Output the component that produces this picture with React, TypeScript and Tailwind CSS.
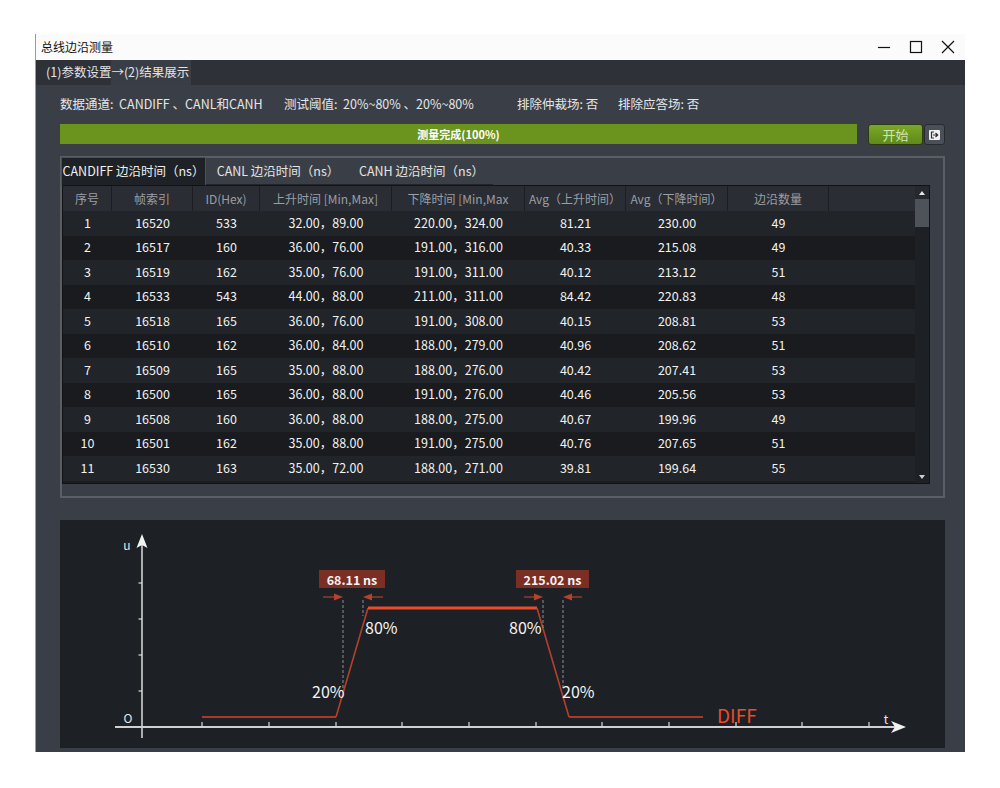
import React from "react";

const rows = [
  ["1", "16520", "533", "32.00，89.00", "220.00，324.00", "81.21", "230.00", "49"],
  ["2", "16517", "160", "36.00，76.00", "191.00，316.00", "40.33", "215.08", "49"],
  ["3", "16519", "162", "35.00，76.00", "191.00，311.00", "40.12", "213.12", "51"],
  ["4", "16533", "543", "44.00，88.00", "211.00，311.00", "84.42", "220.83", "48"],
  ["5", "16518", "165", "36.00，76.00", "191.00，308.00", "40.15", "208.81", "53"],
  ["6", "16510", "162", "36.00，84.00", "188.00，279.00", "40.96", "208.62", "51"],
  ["7", "16509", "165", "35.00，88.00", "188.00，276.00", "40.42", "207.41", "53"],
  ["8", "16500", "165", "36.00，88.00", "191.00，276.00", "40.46", "205.56", "53"],
  ["9", "16508", "160", "36.00，88.00", "188.00，275.00", "40.67", "199.96", "49"],
  ["10", "16501", "162", "35.00，88.00", "191.00，275.00", "40.76", "207.65", "51"],
  ["11", "16530", "163", "35.00，72.00", "188.00，271.00", "39.81", "199.64", "55"],
];

const headers = ["序号", "帧索引", "ID(Hex)", "上升时间 [Min,Max]", "下降时间 [Min,Max", "Avg（上升时间）", "Avg（下降时间）", "边沿数量"];
const colW = ["w-[49px]", "w-[81px]", "w-[67px]", "w-[132px]", "w-[133px]", "w-[101px]", "w-[102px]", "w-[101px]"];

const FONT = "Noto Sans CJK SC, Noto Sans, sans-serif";

const WindowControls = () => (
  <div className="ml-auto flex h-full items-center pr-[1px]">
    <div className="flex h-full w-[32px] items-center justify-center">
      <svg width="14" height="14" viewBox="0 0 14 14"><line x1="1" y1="7.5" x2="13" y2="7.5" stroke="#111" strokeWidth="1.2" /></svg>
    </div>
    <div className="flex h-full w-[32px] items-center justify-center">
      <svg width="14" height="14" viewBox="0 0 14 14"><rect x="1.5" y="1.5" width="11" height="11" fill="none" stroke="#111" strokeWidth="1.2" /></svg>
    </div>
    <div className="flex h-full w-[32px] items-center justify-center">
      <svg width="14" height="14" viewBox="0 0 14 14"><path d="M1 1 L13 13 M13 1 L1 13" stroke="#111" strokeWidth="1.2" /></svg>
    </div>
  </div>
);

const Waveform = () => (
  <svg width="885" height="228" viewBox="0 0 885 228" fontFamily={FONT}>
    {/* axes */}
    <line x1="82" y1="24" x2="82" y2="218" stroke="#dcdcdc" strokeWidth="1.5" />
    <path d="M82 14 L87.5 28 L82 25 L76.5 28 Z" fill="#f2f2f2" />
    <line x1="55" y1="207" x2="838" y2="207" stroke="#cfd0d2" strokeWidth="2" />
    <path d="M846 207 L831 201 L835 207 L831 213 Z" fill="#f2f2f2" />
    {[63, 99, 135, 171].map((y) => (
      <line key={y} x1="78.5" y1={y} x2="82" y2={y} stroke="#dcdcdc" strokeWidth="1.2" />
    ))}
    {[142, 209, 276, 342, 409, 476, 542, 609, 676, 742, 809].map((x) => (
      <line key={x} x1={x} y1="202" x2={x} y2="207" stroke="#dcdcdc" strokeWidth="1.2" />
    ))}
    <text x="67" y="24" fill="#e8e8e8" fontSize="12" textAnchor="middle" dominantBaseline="central">u</text>
    <text x="68" y="197" fill="#e8e8e8" fontSize="12" textAnchor="middle" dominantBaseline="central">O</text>
    <text x="826" y="198" fill="#e8e8e8" fontSize="12" textAnchor="middle" dominantBaseline="central">t</text>

    {/* signal */}
    <line x1="142" y1="197" x2="276" y2="197" stroke="#a83a2d" strokeWidth="2" />
    <line x1="276" y1="197" x2="308" y2="88" stroke="#b3402f" strokeWidth="1.6" />
    <line x1="308" y1="88" x2="477" y2="88" stroke="#ea4b2b" strokeWidth="3" />
    <line x1="477" y1="88" x2="509" y2="197" stroke="#b3402f" strokeWidth="1.6" />
    <line x1="509" y1="197" x2="643" y2="197" stroke="#a83a2d" strokeWidth="2" />

    {/* measurement guides */}
    <g stroke="#8c9096" strokeWidth="1" strokeDasharray="3 2">
      <line x1="283" y1="80" x2="283" y2="170" />
      <line x1="303" y1="80" x2="303" y2="96" />
      <line x1="483" y1="80" x2="483" y2="110" />
      <line x1="503" y1="80" x2="503" y2="170" />
    </g>
    <g stroke="#b5412f" strokeWidth="1.2" fill="#b5412f">
      <line x1="263" y1="77" x2="278" y2="77" />
      <path d="M283 77 L274 73.5 L274 80.5 Z" stroke="none" />
      <line x1="308" y1="77" x2="323" y2="77" />
      <path d="M303 77 L312 73.5 L312 80.5 Z" stroke="none" />
      <line x1="464" y1="77" x2="478" y2="77" />
      <path d="M483 77 L474 73.5 L474 80.5 Z" stroke="none" />
      <line x1="508" y1="77" x2="522" y2="77" />
      <path d="M503 77 L512 73.5 L512 80.5 Z" stroke="none" />
    </g>
    <rect x="259" y="50" width="66" height="18" fill="#7a2e24" />
    <text x="292" y="59.5" fill="#f4f4f4" fontSize="12.5" fontWeight="700" textAnchor="middle" dominantBaseline="central">68.11 ns</text>
    <rect x="456" y="50" width="73" height="18" fill="#7a2e24" />
    <text x="492.5" y="59.5" fill="#f4f4f4" fontSize="12.5" fontWeight="700" textAnchor="middle" dominantBaseline="central">215.02 ns</text>

    <g fill="#f4f4f4" fontSize="16" dominantBaseline="central">
      <text x="252" y="171">20%</text>
      <text x="305" y="107">80%</text>
      <text x="449" y="107">80%</text>
      <text x="502" y="171">20%</text>
    </g>
    <text x="657" y="194" fill="#ea4b2b" fontSize="19" dominantBaseline="central">DIFF</text>
  </svg>
);

const App = () => {
  return (
    <div className="h-[788px] w-[1000px] bg-white pl-[35px] pt-[34px] font-['Noto_Sans_CJK_SC','Noto_Sans',sans-serif]">
      <div className="flex h-[718px] w-[930px] flex-col border-l border-[#93a86a]">
        {/* title bar */}
        <div className="flex h-[26px] items-center bg-[#fbfbfb] pl-[5px]">
          <span className="text-[12px] text-[#111]">总线边沿测量</span>
          <WindowControls />
        </div>

        {/* step strip */}
        <div className="flex h-[25px] items-center bg-[#2e3138] text-[12.5px] text-[#e4e4e4]">
          <span className="pl-[10px]">(1)参数设置</span>
          <span className="flex h-full items-center bg-[#393d45] pr-[2px]">→(2)结果展示</span>
        </div>

        {/* body */}
        <div className="flex flex-1 flex-col bg-[#3a3f47] pb-[4px] pl-[24px] pr-[20px] pt-[11px]">
          <div className="flex h-[16px] items-center text-[12.5px] text-[#e6e6e6]">
            <span className="w-[224px]">数据通道:&nbsp; CANDIFF 、CANL和CANH</span>
            <span className="w-[233px]">测试阈值:&nbsp; 20%~80% 、20%~80%</span>
            <span className="w-[101px]">排除仲裁场: 否</span>
            <span>排除应答场: 否</span>
          </div>

          <div className="mt-[12px] flex h-[21px] items-start">
            <div className="flex h-[20px] flex-1 items-center justify-center bg-[#6b941f] text-[11px] font-bold text-white">
              测量完成(100%)
            </div>
            <button className="ml-[11px] flex h-[21px] w-[55px] items-center justify-center rounded-[3px] border border-[#2c3a16] bg-linear-to-b from-[#7aa829] to-[#5e8a17] text-[13px] text-[#d2e4b6]">
              开始
            </button>
            <button className="ml-[1px] flex h-[21px] w-[21px] items-center justify-center rounded-[3px] border border-[#272a2f] bg-[#4b5058]">
              <svg width="11" height="10" viewBox="0 0 11 10">
                <rect x="0" y="0" width="11" height="10" rx="1" fill="#f2f2f2" />
                <path d="M5 2 H2.5 V8 H5" fill="none" stroke="#2b2e33" strokeWidth="1.2" />
                <path d="M4 5 H8 M6.5 3 L8.7 5 L6.5 7" fill="none" stroke="#2b2e33" strokeWidth="1.2" />
              </svg>
            </button>
          </div>

          {/* group box */}
          <div className="mt-[11px] flex h-[342px] flex-col border-2 border-[#5a5f66]">
            <div className="flex h-[27px] items-stretch">
              <div className="-ml-[1px] -mt-[1px] flex w-[145px] items-center justify-center border-l border-r border-t border-[#4b4f56] bg-[#1e2125] text-[12.5px] text-[#f0f0f0]">
                CANDIFF 边沿时间（ns）
              </div>
              <div className="flex w-[144px] items-center justify-center border-b border-[#22252a] text-[12.5px] text-[#e4e4e4]">
                CANL 边沿时间（ns）
              </div>
              <div className="flex w-[143px] items-center justify-center border-b border-[#22252a] text-[12.5px] text-[#e4e4e4]">
                CANH 边沿时间（ns）
              </div>
            </div>

            <div className="mb-[12px] mr-[13px] flex h-[299px] border border-[#111316] bg-[#1b1d21]">
              <div className="flex flex-1 flex-col">
                <div className="flex h-[25px] bg-[#2a2d33] text-[12px] text-[#9a9fa5]">
                  {headers.map((h, i) => (
                    <div key={i} className={`${colW[i]} flex items-center justify-center overflow-hidden whitespace-nowrap border-r border-[#1c1e22]`}>
                      {h}
                    </div>
                  ))}
                  <div className="flex-1" />
                </div>
                {rows.map((r, ri) => (
                  <div key={ri} className={`flex h-[24.5px] text-[12.5px] text-[#f2f2f2] ${ri % 2 === 0 ? "bg-[#212428]" : "bg-[#191b1e]"}`}>
                    {r.map((c, ci) => (
                      <div key={ci} className={`${colW[ci]} flex items-center justify-center whitespace-nowrap`}>
                        {c}
                      </div>
                    ))}
                    <div className="flex-1" />
                  </div>
                ))}
              </div>
              <div className="flex w-[14px] flex-col bg-[#1d2024]">
                <div className="flex h-[13px] items-center justify-center bg-[#25282d]">
                  <svg width="6" height="4" viewBox="0 0 6 4"><path d="M3 0 L6 4 L0 4 Z" fill="#e6e6e6" /></svg>
                </div>
                <div className="h-[28px] bg-[#4e5359]" />
                <div className="flex-1" />
                <div className="flex h-[13px] items-center justify-center">
                  <svg width="6" height="4" viewBox="0 0 6 4"><path d="M0 0 L6 0 L3 4 Z" fill="#cfcfcf" /></svg>
                </div>
              </div>
            </div>
          </div>

          {/* waveform panel */}
          <div className="mt-[22px] h-[228px] bg-[#1d2024]">
            <Waveform />
          </div>
        </div>
      </div>
    </div>
  );
};

export default App;
